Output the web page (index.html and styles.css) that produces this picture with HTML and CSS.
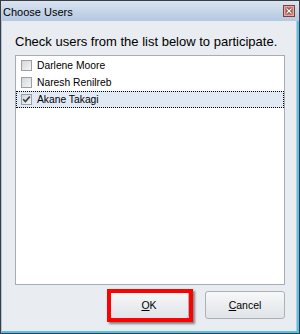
FILE: index.html
```html
<!DOCTYPE html>
<html>
<head>
<meta charset="utf-8">
<link rel="stylesheet" href="styles.css">
</head>
<body>
<div class="window">
  <div class="titlebar">
    <span class="title">Choose Users</span>
    <span class="close">
      <svg width="12" height="12" viewBox="0 0 12 12">
        <rect x="0.5" y="0.5" width="11" height="11" fill="#cf7e74" stroke="#7c3f3a"/>
        <rect x="1.5" y="1.5" width="9" height="9" fill="none" stroke="#e6aaa2"/>
        <path d="M3.5 3.5 L8.5 8.5 M8.5 3.5 L3.5 8.5" stroke="#5a2a26" stroke-width="2.6"/>
        <path d="M3.5 3.5 L8.5 8.5 M8.5 3.5 L3.5 8.5" stroke="#ffffff" stroke-width="1.4"/>
      </svg>
    </span>
  </div>
  <div class="client">
    <div class="label">Check users from the list below to participate.</div>
    <div class="list">
      <div class="row"><span class="check"></span><span class="name">Darlene Moore</span></div>
      <div class="row"><span class="check"></span><span class="name">Naresh Renilreb</span></div>
      <div class="row selected"><span class="check checked"><svg width="9" height="9" viewBox="0 0 9 9"><path d="M1.2 4.2 L3.4 6.6 L7.8 1.6" fill="none" stroke="#3c3c3c" stroke-width="1.6"/></svg></span><span class="name">Akane Takagi</span></div>
    </div>
    <div class="buttons">
      <div class="btn ok"><span><u>O</u>K</span><div class="highlight"></div></div>
      <div class="btn"><span><u>C</u>ancel</span></div>
    </div>
  </div>
</div>
</body>
</html>
```
FILE: styles.css
```css
html, body {
  margin: 0;
  padding: 0;
  background: #ffffff;
}
.window {
  width: 300px;
  height: 334px;
  box-sizing: border-box;
  border: 1px solid #3a3d42;
  background: #e9ecf1;
  display: flex;
  flex-direction: column;
  font-family: "Liberation Sans", Arial, sans-serif;
  color: #000;
}
.titlebar {
  height: 20px;
  flex: none;
  display: flex;
  align-items: center;
  justify-content: space-between;
  padding: 0 4px 0 2px;
  background: linear-gradient(#dbe5f1, #c4d4e8 55%, #b3c8e2);
}
.title {
  font-size: 11px;
  line-height: 18px;
  padding-top: 2px;
}
.close {
  width: 12px;
  height: 12px;
  display: block;
}
.close svg {
  display: block;
}
.client {
  flex: 1;
  display: flex;
  flex-direction: column;
  padding: 13px 12px 0 13px;
  border-left: 1px solid #b3c2d6;
  border-right: 2px solid #4cc4ee;
  border-bottom: 2px solid #4cc4ee;
  box-shadow: inset -1px 0 0 #c3c8d0;
  border-top: 0;
}
.label {
  font-size: 13px;
  line-height: 16px;
  white-space: nowrap;
  margin-bottom: 5px;
}
.list {
  height: 230px;
  box-sizing: border-box;
  border: 1px solid #a7adb6;
  background: #ffffff;
  padding-top: 1px;
}
.row {
  height: 17px;
  display: flex;
  align-items: center;
  padding-left: 5px;
  font-size: 10.3px;
}
.row.selected {
  background: #e1e9f4;
  outline: 1px dotted #000;
  outline-offset: -1px;
}
.check {
  width: 11px;
  height: 11px;
  box-sizing: border-box;
  border: 1px solid #9aa0a8;
  background: linear-gradient(135deg, #d4d6d9, #f4f5f6);
  margin-right: 5px;
  display: flex;
  align-items: center;
  justify-content: center;
  flex: none;
}
.check svg {
  display: block;
}
.buttons {
  margin-top: 6px;
  display: flex;
  justify-content: flex-end;
  gap: 16px;
}
.btn {
  width: 80px;
  height: 28px;
  box-sizing: border-box;
  border: 1px solid #acb0b7;
  border-radius: 3px;
  background: linear-gradient(#f7f8f9, #ebedf0 50%, #e1e4e8);
  display: flex;
  align-items: center;
  justify-content: center;
  font-size: 10.5px;
  position: relative;
}
.btn u {
  text-decoration-thickness: 1px;
  text-underline-offset: 1px;
}
.highlight {
  position: absolute;
  left: -3px;
  top: -3px;
  width: 86px;
  height: 33px;
  box-sizing: border-box;
  border: 4px solid #ff0000;
  box-shadow: 2px 2px 2px rgba(0, 0, 0, 0.45);
}
```
